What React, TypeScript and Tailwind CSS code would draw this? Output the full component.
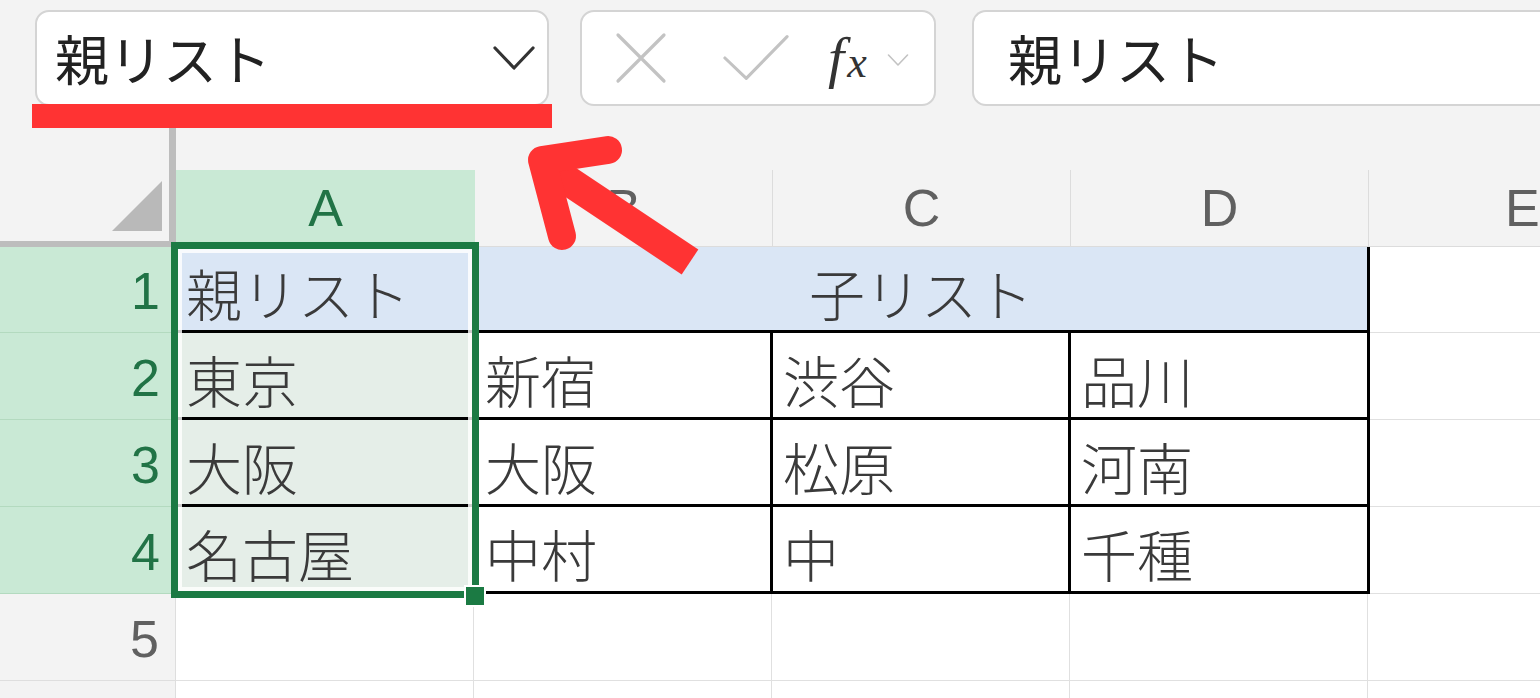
import React from "react";

const cjk = "font-['Noto_Sans_CJK_JP','Noto_Sans_CJK_SC',sans-serif]";
const latin = "font-['Liberation_Sans',Arial,sans-serif]";

const rows = [
  { n: 1, a: "親リスト", merged: "子リスト" },
  { n: 2, a: "東京", b: "新宿", c: "渋谷", d: "品川" },
  { n: 3, a: "大阪", b: "大阪", c: "松原", d: "河南" },
  { n: 4, a: "名古屋", b: "中村", c: "中", d: "千種" },
];

function Chevron({ className }: { className?: string }) {
  return (
    <svg viewBox="0 0 42 24" className={className} fill="none">
      <path d="M2 2 L21 22 L40 2" stroke="currentColor" strokeWidth="3.2" strokeLinecap="round" strokeLinejoin="round" />
    </svg>
  );
}

function Cell({ text, className }: { text?: string; className: string }) {
  return (
    <div className={`flex items-end pl-[10px] pb-[10px] text-[56px] leading-none font-light text-[#3a3a3a] ${cjk} ${className}`}>
      {text}
    </div>
  );
}

export default function App() {
  return (
    <div className="relative w-[1540px] h-[698px] overflow-hidden bg-[#f3f3f3]">
      {/* toolbar */}
      <div className="flex items-start h-[128px] pt-[10px]">
        <div className="ml-[32px] w-[520px] flex flex-col">
          <div className="mx-[3px] h-[96px] bg-white border-2 border-[#d4d4d4] rounded-[14px] flex items-center pl-[18px] pr-[12px]">
            <span className={`text-[54px] leading-none text-[#222] ${cjk}`}>親リスト</span>
            <Chevron className="ml-auto w-[42px] h-[24px] text-[#333]" />
          </div>
          <div className="-mt-[2px] h-[24px] bg-[#ff3333]" />
        </div>

        <div className="ml-[28px] w-[356px] h-[96px] bg-white border-2 border-[#d4d4d4] rounded-[14px] flex items-center">
          <svg viewBox="0 0 52 52" className="ml-[33px] w-[52px] h-[52px]" fill="none">
            <path d="M3 3 L49 49 M49 3 L3 49" stroke="#c3c3c3" strokeWidth="3.2" strokeLinecap="round" />
          </svg>
          <svg viewBox="0 0 70 50" className="ml-[55px] w-[68px] h-[50px]" fill="none">
            <path d="M3 25 L25 46 L67 3" stroke="#c3c3c3" strokeWidth="3.2" strokeLinecap="round" strokeLinejoin="round" />
          </svg>
          <span className="ml-[38px] flex items-baseline text-[#333] font-['Liberation_Serif',serif] italic leading-none">
            <span className="text-[58px]">f</span>
            <span className="text-[44px] ml-[3px]">x</span>
          </span>
          <Chevron className="ml-[20px] mt-[4px] w-[22px] h-[12px] text-[#c3c3c3]" />
        </div>

        <div className="ml-[36px] flex-1 h-[96px] bg-white border-2 border-r-0 border-[#d4d4d4] rounded-l-[14px] flex items-center pl-[34px]">
          <span className={`text-[54px] leading-none text-[#222] ${cjk}`}>親リスト</span>
        </div>
      </div>

      {/* column headings */}
      <div className={`flex h-[119px] ${latin}`}>
        <div className="w-[176px] h-full border-r-[7px] border-b-[6px] border-[#bdbdbd] flex items-end justify-end pr-[7px] pb-[10px]">
          <svg viewBox="0 0 50 50" className="w-[50px] h-[50px]">
            <polygon points="0,50 50,50 50,0" fill="#b9b9b9" />
          </svg>
        </div>
        <div className="flex-1 flex flex-col">
          <div className="flex-1" />
          <div className="flex h-[77px] text-[52px] leading-none">
            <div className="w-[299px] bg-[#c9e9d5] border-b border-[#b7dcc4] flex items-center justify-center text-[#217346]">A</div>
            <div className="w-[298px] border-r border-b border-[#dcdcdc] flex items-center justify-center text-[#606060]">B</div>
            <div className="w-[298px] border-r border-b border-[#dcdcdc] flex items-center justify-center text-[#606060]">C</div>
            <div className="w-[298px] border-r border-b border-[#dcdcdc] flex items-center justify-center text-[#606060]">D</div>
            <div className="flex-1 border-b border-[#dcdcdc] flex items-center pl-[136px] text-[#606060]">E</div>
          </div>
        </div>
      </div>

      {/* rows */}
      {rows.map((r) => (
        <div key={r.n} className={`flex ${r.n === 1 ? "h-[86px]" : "h-[87px]"}`}>
          <div className={`w-[176px] bg-[#c9e9d5] border-b border-[#b3dabf] flex items-end justify-end pr-[16px] pb-[15px] text-[52px] leading-none text-[#217346] ${latin}`}>
            {r.n}
          </div>
          {r.n === 1 ? (
            <>
              <Cell text={r.a} className="w-[299px] bg-[#dae6f5] border-b-[3px] border-black" />
              <div className={`w-[895px] bg-[#dae6f5] border-r-[3px] border-b-[3px] border-black flex items-end justify-center pb-[10px] text-[56px] leading-none font-light text-[#3a3a3a] ${cjk}`}>
                {r.merged}
              </div>
            </>
          ) : (
            <>
              <Cell text={r.a} className="w-[299px] bg-[#e5eee8] border-b-[3px] border-black" />
              <Cell text={r.b} className="w-[298px] bg-white border-r-[3px] border-b-[3px] border-black" />
              <Cell text={r.c} className="w-[298px] bg-white border-r-[3px] border-b-[3px] border-black" />
              <Cell text={r.d} className="w-[299px] bg-white border-r-[3px] border-b-[3px] border-black" />
            </>
          )}
          <div className="flex-1 bg-white border-b border-[#e0e0e0]" />
        </div>
      ))}
      {[5, 6].map((n) => (
        <div key={n} className="flex h-[87px]">
          <div className={`w-[176px] border-r border-b border-[#dedede] flex items-end justify-end pr-[16px] pb-[15px] text-[52px] leading-none text-[#606060] ${latin}`}>
            {n === 5 ? n : null}
          </div>
          <div className="w-[298px] bg-white border-r border-b border-[#e0e0e0]" />
          <div className="w-[298px] bg-white border-r border-b border-[#e0e0e0]" />
          <div className="w-[298px] bg-white border-r border-b border-[#e0e0e0]" />
          <div className="w-[298px] bg-white border-r border-b border-[#e0e0e0]" />
          <div className="flex-1 bg-white border-b border-[#e0e0e0]" />
        </div>
      ))}

      {/* selection A1:A4 */}
      <div className="absolute left-[171px] top-[242px] w-[308px] h-[356px] border-[7px] border-[#1b7a43]">
        <div className="w-full h-full border-[4px] border-white/80" />
      </div>
      <div className="absolute left-[464px] top-[585px] w-[22px] h-[22px] bg-[#1b7a43] border-2 border-white" />

      {/* red arrow annotation */}
      <svg className="absolute left-0 top-0 w-[1540px] h-[698px] pointer-events-none" viewBox="0 0 1540 698">
        <line x1="552" y1="170" x2="690" y2="262" stroke="#ff3333" strokeWidth="30" />
        <polyline points="608,150 542,160 562,236" fill="none" stroke="#ff3333" strokeWidth="28" strokeLinecap="round" strokeLinejoin="round" />
      </svg>
    </div>
  );
}
